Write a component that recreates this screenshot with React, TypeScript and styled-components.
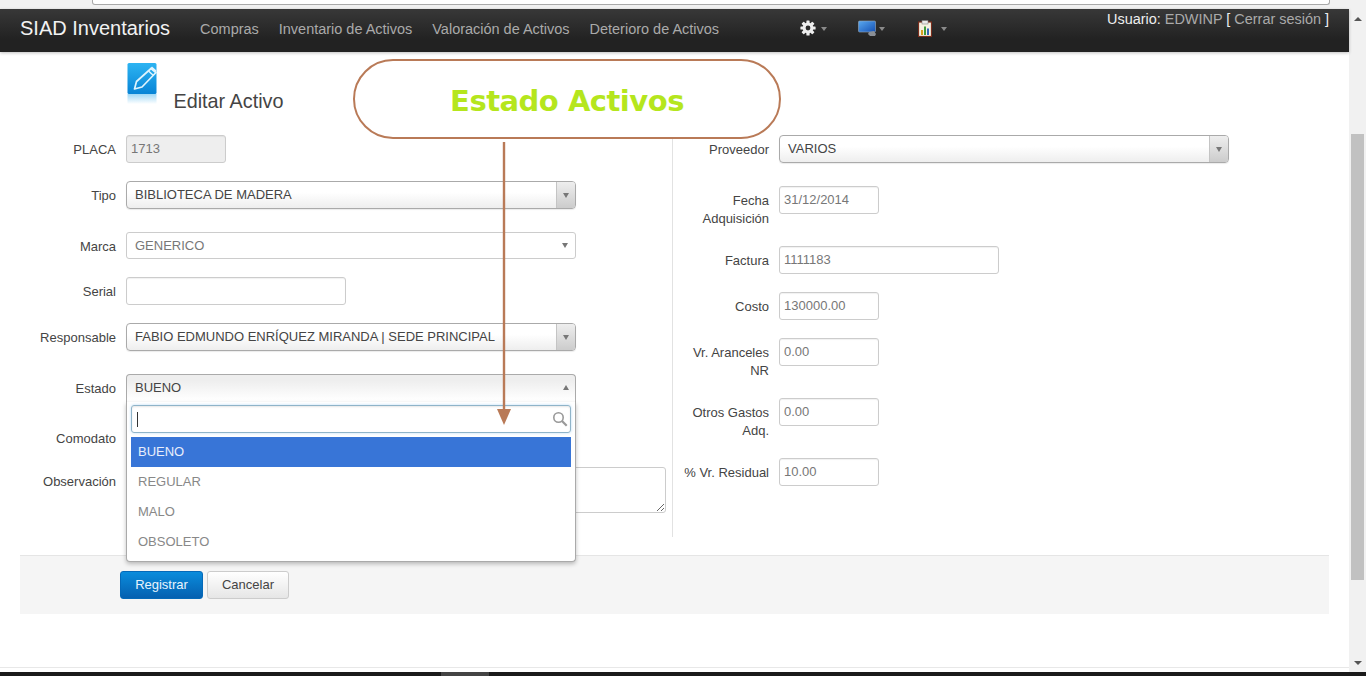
import React from "react";
import styled, { createGlobalStyle } from "styled-components";

const Global = createGlobalStyle`
  html, body { margin: 0; padding: 0; height: 100%; overflow: hidden; background: #fff; }
  body { font-family: "Liberation Sans", Arial, sans-serif; font-size: 13px; color: #444; }
  * { box-sizing: border-box; }
`;

const Frame = styled.div`
  position: relative; width: 1366px; height: 676px; display: flex; flex-direction: column; overflow: hidden;
`;
const TopStrip = styled.div`
  height: 9px; flex: none; background: #f1f1f1;
`;
const UrlBox = styled.div`
  width: 1238px; height: 5px; margin-left: 92px; background: #fff;
  border: 1px solid #a9a9a9; border-top: none; border-radius: 0 0 3px 3px;
`;
const Middle = styled.div`
  flex: 1; min-height: 0; display: flex;
`;
const Main = styled.div`
  flex: none; width: 1349px; display: flex; flex-direction: column;
`;
const Navbar = styled.div`
  height: 43px; flex: none; display: flex; position: relative;
  background: linear-gradient(#383838, #222 70%);
  box-shadow: 0 1px 3px rgba(0,0,0,.25);
`;
const Brand = styled.div`
  margin-left: 20px; margin-right: 20px; color: #f2f2f2; font-size: 20px; line-height: 38px;
`;
const NavLink = styled.div`
  padding: 0 10px; line-height: 40px; color: #aaa; font-size: 14.47px; white-space: nowrap;
`;
const IconMenus = styled.div`
  display: flex; margin-left: 71px; height: 38px; align-items: center;
`;
const IconMenu = styled.div<{ $w: number; $gap: number }>`
  width: ${(p) => p.$w}px; display: flex; align-items: center; gap: ${(p) => p.$gap}px;
`;
const Caret = styled.span`
  width: 0; height: 0; border-left: 3.5px solid transparent; border-right: 3.5px solid transparent;
  border-top: 4px solid #8a8a8a; margin-top: 2px;
`;
const UserBox = styled.div`
  margin-left: auto; margin-right: 20px; line-height: 20px; color: #eee; font-size: 14.45px; white-space: nowrap;
`;
const UserLink = styled.span`
  color: #aaa;
`;
const Header = styled.div`
  height: 77px; flex: none; display: flex; padding: 10px 0 0 127px;
`;
const PencilWrap = styled.div`
  width: 32px; height: 44px; flex: none;
`;
const Title = styled.div`
  margin: 28px 0 0 14.5px; font-size: 19.8px; line-height: 22px; color: #444;
`;
const Form = styled.div`
  display: flex; height: 408px; flex: none; padding-left: 20px;
`;
const LeftCol = styled.div`
  width: 653px; flex: none; border-right: 1px solid #e2e2e2; padding-top: 6px;
`;
const RightCol = styled.div`
  flex: 1; padding-top: 6px;
`;
const Row = styled.div<{ $mt?: number }>`
  display: flex; gap: 10px; align-items: flex-start; margin-top: ${(p) => p.$mt ?? 0}px;
`;
const Label = styled.div`
  width: 96px; flex: none; text-align: right; padding-top: 6px; line-height: 18px; font-size: 13px; color: #444;
`;
const Input = styled.input<{ $w: number; $off?: boolean }>`
  width: ${(p) => p.$w}px; height: 28px; padding: 0 4px 1px; margin: 0;
  font: 13px "Liberation Sans", Arial, sans-serif; color: #777;
  background: ${(p) => (p.$off ? "#eee" : "#fff")};
  border: 1px solid #ccc; border-radius: 3px; outline: none;
  box-shadow: inset 0 1px 1px rgba(0,0,0,.06);
`;
const Area = styled.textarea`
  width: 540px; height: 46px; margin: 0; border: 1px solid #ccc; border-radius: 3px; resize: vertical; outline: none; display: block;
`;
const Chosen = styled.div<{ $w: number }>`
  position: relative; width: ${(p) => p.$w}px; height: 28px; display: flex; align-items: stretch;
  border: 1px solid #aaa; border-radius: 4px; overflow: hidden;
  background: linear-gradient(#fff 40%, #eee);
  box-shadow: 0 1px 1px rgba(0,0,0,.08);
`;
const ChosenText = styled.div`
  flex: 1; padding-left: 8px; line-height: 25px; color: #444; font-size: 13px; white-space: nowrap;
`;
const ChosenBtn = styled.div`
  width: 19px; flex: none; display: flex; align-items: center; justify-content: center;
  border-left: 1px solid #c4c4c4; background: linear-gradient(#eee, #ccc);
`;
const DownTip = styled.span`
  width: 0; height: 0; border-left: 3px solid transparent; border-right: 3px solid transparent;
  border-top: 5px solid #777;
`;
const Plain = styled.div`
  width: 450px; height: 27px; display: flex; align-items: center; justify-content: space-between;
  padding: 0 7px 1px 8px; border: 1px solid #ccc; border-radius: 3px; background: #fff;
  color: #777; font-size: 13px;
`;
const StateWrap = styled.div`
  position: relative; width: 450px; height: 28px;
`;
const StateHead = styled.div`
  height: 29px; display: flex; align-items: center; justify-content: space-between;
  padding: 0 6px 4px 8px; border: 1px solid #aaa; border-bottom: none; border-radius: 4px 4px 0 0;
  background: linear-gradient(#eee 20%, #fff 90%); color: #444; font-size: 13px;
`;
const UpTip = styled.span`
  width: 0; height: 0; border-left: 3px solid transparent; border-right: 3px solid transparent;
  border-bottom: 5px solid #777;
`;
const Drop = styled.div`
  position: absolute; left: 0; top: 28px; width: 450px; height: 160px; z-index: 5;
  padding: 3px 4px 0; background: #fff;
  border: 1px solid #aaa; border-top: none; border-radius: 0 0 4px 4px;
  box-shadow: 0 2px 4px rgba(0,0,0,.25);
`;
const SearchBox = styled.div`
  position: relative; height: 28px; margin-bottom: 4px; display: flex; align-items: center; justify-content: space-between;
  padding: 0 2px 0 5px; border: 1px solid #8fb4c9; border-radius: 3px;
  box-shadow: inset 0 1px 2px rgba(0,0,0,.1), 0 0 3px rgba(82,168,236,.4);
`;
const TextCaret = styled.span`
  width: 1px; height: 15px; background: #333;
`;
const Option = styled.div<{ $on?: boolean }>`
  height: 30px; line-height: 29px; padding-left: 7px; font-size: 13px;
  color: ${(p) => (p.$on ? "#e8eefb" : "#888")};
  background: ${(p) => (p.$on ? "#3875d7" : "transparent")};
`;
const Footer = styled.div`
  margin: 18px 0 0 20px; width: 1309px; height: 59px; flex: none; display: flex; gap: 4px; align-items: flex-start;
  padding: 15px 0 0 100px; background: #f5f5f5; border-top: 1px solid #e5e5e5;
`;
const Btn = styled.button<{ $primary?: boolean }>`
  width: ${(p) => (p.$primary ? 83 : 82)}px; height: 28px; padding: 0 0 2px; border-radius: 3px;
  font: 13px "Liberation Sans", Arial, sans-serif;
  color: ${(p) => (p.$primary ? "#e8f4fd" : "#444")};
  border: 1px solid ${(p) => (p.$primary ? "#0569b8" : "#ccc")};
  background: ${(p) => (p.$primary ? "linear-gradient(#0a8cdc, #0560b0)" : "linear-gradient(#fff, #e6e6e6)")};
`;
const BottomLine = styled.div`
  height: 5px; margin-top: auto; border-top: 1px solid #e8e8e8; flex: none;
`;
const ScrollTrack = styled.div`
  width: 17px; flex: none; background: #f1f1f1; display: flex; flex-direction: column; align-items: center;
`;
const ScrollTop = styled.span`
  margin-top: 8px; width: 0; height: 0; border-left: 4px solid transparent; border-right: 4px solid transparent;
  border-bottom: 4px solid #555;
`;
const ScrollThumb = styled.div`
  margin-top: 113px; width: 13px; height: 446px; background: #c1c1c1;
`;
const ScrollBottom = styled.span`
  margin-top: 81px; width: 0; height: 0; border-left: 4px solid transparent; border-right: 4px solid transparent;
  border-top: 4px solid #555;
`;
const Taskbar = styled.div`
  height: 4px; flex: none; background: #1a1a1a; display: flex;
`;
const TaskItem = styled.div`
  width: 48px; margin-left: 441px; background: #444;
`;
const Callout = styled.div`
  position: absolute; left: 353px; top: 59px; width: 428px; height: 80px; z-index: 8;
  display: flex; align-items: center; justify-content: center; padding: 3px 0 0 0;
  background: #fff; border: 2px solid #b97a57; border-radius: 40px;
  color: #b5e61d; font: bold 29px "DejaVu Sans", Verdana, sans-serif; letter-spacing: -0.5px;
`;
const Arrow = styled.svg`
  position: absolute; left: 490px; top: 140px; z-index: 9;
`;

const Gear = () => (
  <svg width="16" height="16" viewBox="0 0 16 16">
    <g fill="#eee">
      <circle cx="8" cy="8" r="5.4" />
      {[0, 45, 90, 135].map((a) => (
        <rect key={a} x="6.4" y="0.4" width="3.2" height="15.2" rx="0.6" transform={`rotate(${a} 8 8)`} />
      ))}
    </g>
    <circle cx="8" cy="8" r="2.4" fill="#2a2a2a" />
  </svg>
);
const Monitor = () => (
  <svg width="19" height="16" viewBox="0 0 19 16">
    <defs>
      <linearGradient id="mon" x1="0" y1="0" x2="1" y2="1">
        <stop offset="0" stopColor="#5aa9f0" />
        <stop offset="1" stopColor="#1450b4" />
      </linearGradient>
    </defs>
    <rect x="0.5" y="1" width="17" height="11" rx="1" fill="url(#mon)" stroke="#9ab" strokeWidth="0.6" />
    <path d="M11 12l5-1 2 3-1 2h-5l-2-2z" fill="#8a8f96" />
  </svg>
);
const Board = () => (
  <svg width="14" height="17" viewBox="0 0 14 17">
    <rect x="0.5" y="2" width="13" height="14.5" fill="#f5f1e2" stroke="#7a2d1c" strokeWidth="1.2" />
    <rect x="4" y="0.5" width="6" height="3.5" fill="#e9e9e9" stroke="#777" strokeWidth="0.5" />
    <rect x="3" y="10" width="2" height="5" fill="#d8a020" />
    <rect x="6" y="6.5" width="2" height="8.5" fill="#3f9a3a" />
    <rect x="9" y="8.5" width="2" height="6.5" fill="#3468b8" />
  </svg>
);
const Pencil = () => (
  <svg width="32" height="44" viewBox="0 0 32 44">
    <defs>
      <linearGradient id="pb" x1="0" y1="0" x2="0" y2="1">
        <stop offset="0" stopColor="#2db4f2" />
        <stop offset="1" stopColor="#0784d6" />
      </linearGradient>
      <linearGradient id="pr" x1="0" y1="0" x2="0" y2="1">
        <stop offset="0" stopColor="#9fd8f6" />
        <stop offset="1" stopColor="#ffffff" />
      </linearGradient>
    </defs>
    <rect x="0.5" y="1" width="29" height="31" rx="1.5" fill="url(#pb)" />
    <rect x="0.5" y="32" width="29" height="10" fill="url(#pr)" />
    <path d="M24 6.5l5 4L15 25l-7.5 2 2-7.5z" fill="none" stroke="#dff4fd" strokeWidth="1.7" strokeLinejoin="round" />
    <path d="M21.5 9l5 4.5" stroke="#dff4fd" strokeWidth="1.5" />
    <path d="M25 4.5l4.500 4-1.500 2-5-4z" fill="#dff4fd" />
  </svg>
);
const Glass = () => (
  <svg width="16" height="16" viewBox="0 0 16 16" fill="none" stroke="#999" strokeWidth="1.6">
    <circle cx="6.500" cy="6.500" r="4.700" />
    <path d="M10 10l4.700 4.700" strokeWidth="2.200" />
  </svg>
);

const Sel = ({ w, text }: { w: number; text: string }) => (
  <Chosen $w={w}>
    <ChosenText>{text}</ChosenText>
    <ChosenBtn><DownTip /></ChosenBtn>
  </Chosen>
);

export default function App() {
  return (
    <Frame>
      <Global />
      <TopStrip><UrlBox /></TopStrip>
      <Middle>
        <Main>
          <Navbar>
            <Brand>SIAD Inventarios</Brand>
            <NavLink>Compras</NavLink>
            <NavLink>Inventario de Activos</NavLink>
            <NavLink>Valoración de Activos</NavLink>
            <NavLink>Deterioro de Activos</NavLink>
            <IconMenus>
              <IconMenu $w={58} $gap={5}><Gear /><Caret /></IconMenu>
              <IconMenu $w={60} $gap={2}><Monitor /><Caret /></IconMenu>
              <IconMenu $w={40} $gap={9}><Board /><Caret /></IconMenu>
            </IconMenus>
            <UserBox>
              Usuario: <UserLink>EDWINP</UserLink> [ <UserLink>Cerrar sesión</UserLink> ]
            </UserBox>
          </Navbar>
          <Header>
            <PencilWrap><Pencil /></PencilWrap>
            <Title>Editar Activo</Title>
          </Header>
          <Form>
            <LeftCol>
              <Row><Label>PLACA</Label><Input $w={100} $off readOnly value="1713" /></Row>
              <Row $mt={18}><Label>Tipo</Label><Sel w={450} text="BIBLIOTECA DE MADERA" /></Row>
              <Row $mt={23}><Label>Marca</Label><Plain>GENERICO<DownTip /></Plain></Row>
              <Row $mt={18}><Label>Serial</Label><Input $w={220} readOnly value="" /></Row>
              <Row $mt={18}><Label>Responsable</Label><Sel w={450} text="FABIO EDMUNDO ENRÍQUEZ MIRANDA | SEDE PRINCIPAL" /></Row>
              <Row $mt={23}>
                <Label>Estado</Label>
                <StateWrap>
                  <StateHead>BUENO<UpTip /></StateHead>
                  <Drop>
                    <SearchBox><TextCaret /><Glass /></SearchBox>
                    <Option $on>BUENO</Option>
                    <Option>REGULAR</Option>
                    <Option>MALO</Option>
                    <Option>OBSOLETO</Option>
                  </Drop>
                </StateWrap>
              </Row>
              <Row $mt={22}><Label>Comodato</Label></Row>
              <Row $mt={19}><Label>Observación</Label><Area readOnly /></Row>
            </LeftCol>
            <RightCol>
              <Row><Label>Proveedor</Label><Sel w={450} text="VARIOS" /></Row>
              <Row $mt={23}><Label>Fecha Adquisición</Label><Input $w={100} readOnly value="31/12/2014" /></Row>
              <Row $mt={18}><Label>Factura</Label><Input $w={220} readOnly value="1111183" /></Row>
              <Row $mt={18}><Label>Costo</Label><Input $w={100} readOnly value="130000.00" /></Row>
              <Row $mt={18}><Label>Vr. Aranceles NR</Label><Input $w={100} readOnly value="0.00" /></Row>
              <Row $mt={18}><Label>Otros Gastos Adq.</Label><Input $w={100} readOnly value="0.00" /></Row>
              <Row $mt={18}><Label>% Vr. Residual</Label><Input $w={100} readOnly value="10.00" /></Row>
            </RightCol>
          </Form>
          <Footer>
            <Btn $primary>Registrar</Btn>
            <Btn>Cancelar</Btn>
          </Footer>
          <BottomLine />
        </Main>
        <ScrollTrack>
          <ScrollTop />
          <ScrollThumb />
          <ScrollBottom />
        </ScrollTrack>
      </Middle>
      <Taskbar><TaskItem /></Taskbar>
      <Callout>Estado Activos</Callout>
      <Arrow width="28" height="290" viewBox="0 0 28 290">
        <path d="M14 2V272" stroke="#b97a57" strokeWidth="2.400" fill="none" />
        <path d="M7 269H21L14 285z" fill="#b97a57" />
      </Arrow>
    </Frame>
  );
}
